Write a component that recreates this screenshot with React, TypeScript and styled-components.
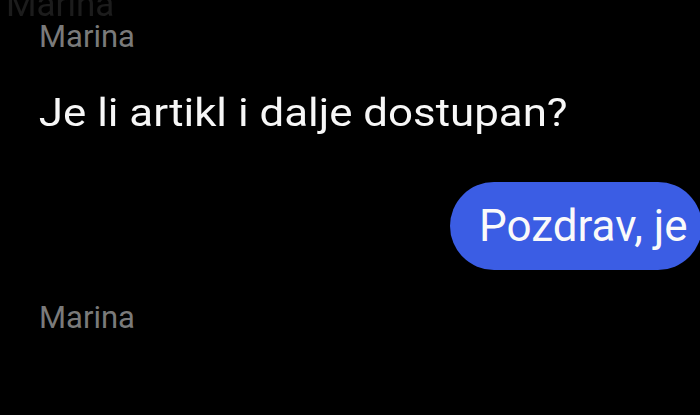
import React from "react";
import styled, { createGlobalStyle } from "styled-components";

const Global = createGlobalStyle`
  html, body { margin: 0; padding: 0; background: #000; }
  body { width: 700px; height: 415px; overflow: hidden; font-family: Roboto, "Noto Sans", sans-serif; }
`;

const Screen = styled.div`
  width: 700px;
  height: 415px;
  background: #000;
  display: flex;
  flex-direction: column;
  overflow: hidden;
`;

const Ghost = styled.div`
  margin-top: -15px;
  padding-left: 6px;
  font-size: 35px;
  line-height: 40px;
  height: 40px;
  color: #1c1c1c;
  filter: blur(0.7px);
`;

const Name = styled.div<{ $top: number }>`
  margin-top: ${(p) => p.$top}px;
  padding-left: 39px;
  font-size: 31px;
  line-height: 36px;
  color: #7a7a7a;
`;

const Incoming = styled.div`
  margin-top: 36px;
  padding-left: 35px;
  font-size: 39.5px;
  line-height: 44px;
  color: #f7f7f7;
  white-space: nowrap;
  transform: scaleX(1.11);
  transform-origin: left center;
`;

const OutRow = styled.div`
  margin-top: 47px;
  display: flex;
  justify-content: flex-end;
`;

const Bubble = styled.div`
  width: 252px;
  height: 88px;
  box-sizing: border-box;
  margin-right: -2px;
  padding-left: 29px;
  display: flex;
  align-items: center;
  background: #3b5de4;
  border-radius: 44px;
  font-size: 44px;
  line-height: 44px;
  color: #fafafa;
  white-space: nowrap;
`;

export default function App() {
  return (
    <Screen>
      <Global />
      <Ghost>Marina</Ghost>
      <Name $top={-6}>Marina</Name>
      <Incoming>Je li artikl i dalje dostupan?</Incoming>
      <OutRow>
        <Bubble>Pozdrav, je</Bubble>
      </OutRow>
      <Name $top={30}>Marina</Name>
    </Screen>
  );
}
